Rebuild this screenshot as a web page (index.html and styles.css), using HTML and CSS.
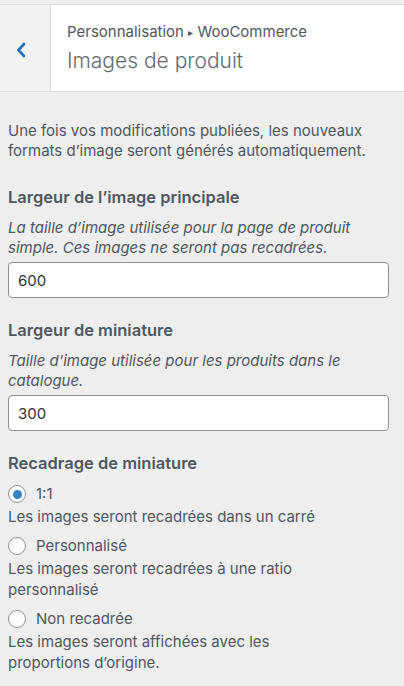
FILE: index.html
```html
<!DOCTYPE html>
<html lang="fr">
<head>
    <meta charset="UTF-8">
    <meta name="viewport" content="width=device-width, initial-scale=1.0">
    <title>Images de produit</title>
    <link rel="stylesheet" href="styles.css">
</head>
<body>
    <div class="panel">
        <header class="panel-head">
            <button class="back" type="button" aria-label="Retour">
                <svg width="10" height="16" viewBox="0 0 10 16">
                    <polyline points="8,2 2.5,8 8,14" fill="none" stroke="#2271b1" stroke-width="2.6" stroke-linecap="round" stroke-linejoin="round"/>
                </svg>
            </button>
            <div class="head-title">
                <div class="crumb">Personnalisation <span class="sep">&#9656;</span> WooCommerce</div>
                <h1>Images de produit</h1>
            </div>
        </header>

        <div class="content">
            <p class="intro">Une fois vos modifications publiées, les nouveaux formats d’image seront générés automatiquement.</p>

            <div class="field">
                <h2>Largeur de l’image principale</h2>
                <p class="desc">La taille d’image utilisée pour la page de produit simple. Ces images ne seront pas recadrées.</p>
                <input class="text-input" type="text" value="600">
            </div>

            <div class="field">
                <h2>Largeur de miniature</h2>
                <p class="desc">Taille d’image utilisée pour les produits dans le catalogue.</p>
                <input class="text-input" type="text" value="300">
            </div>

            <div class="field">
                <h2>Recadrage de miniature</h2>
                <div class="options">
                    <div class="option">
                        <label class="radio"><span class="dot checked"></span>1:1</label>
                        <p class="option-desc">Les images seront recadrées dans un carré</p>
                    </div>
                    <div class="option">
                        <label class="radio"><span class="dot"></span>Personnalisé</label>
                        <p class="option-desc">Les images seront recadrées à une ratio personnalisé</p>
                    </div>
                    <div class="option">
                        <label class="radio"><span class="dot"></span>Non recadrée</label>
                        <p class="option-desc">Les images seront affichées avec les proportions d’origine.</p>
                    </div>
                </div>
            </div>
        </div>
    </div>
</body>
</html>
```

FILE: styles.css
```css
body {
    margin: 0;
    background-color: #eeeeee;
    font-family: Inter, 'Noto Sans', sans-serif;
    font-size: 15px;
    color: #50575e;
}

.panel {
    width: 404px;
}

.panel-head {
    display: flex;
    margin-top: 4px;
    height: 86px;
    background-color: #fff;
    border-top: 1px solid #dcdcde;
    border-bottom: 1px solid #dcdcde;
}

.back {
    width: 51px;
    flex: none;
    border: 0;
    border-right: 1px solid #dcdcde;
    background-color: #f1f1f1;
    display: flex;
    align-items: center;
    justify-content: flex-start;
    padding: 3px 0 0 16px;
    margin: 0;
}

.head-title {
    padding: 16px 0 0 16px;
}

.crumb {
    font-size: 15px;
    line-height: 22px;
    color: #50575e;
}

.crumb .sep {
    font-size: 10px;
    vertical-align: 1px;
}

h1 {
    margin: 5px 0 0;
    font-size: 21px;
    font-weight: 300;
    line-height: 26px;
    color: #646970;
}

.content {
    display: flex;
    flex-direction: column;
    padding: 29px 15px 20px 8px;
}

.intro {
    margin: 0 0 4px;
    line-height: 20px;
}

.field {
    margin-top: 22px;
}

h2 {
    margin: 0;
    font-size: 16.5px;
    font-weight: 600;
    line-height: 20px;
    color: #50575e;
}

.desc {
    margin: 11px 0 0;
    font-style: italic;
    line-height: 20px;
}

.text-input {
    display: block;
    box-sizing: border-box;
    width: 100%;
    height: 36px;
    margin-top: 4px;
    padding: 0 9px;
    border: 1px solid #8c8f94;
    border-radius: 4px;
    background: #fff;
    font-family: inherit;
    font-size: 15px;
    color: #2c3338;
}

.options {
    display: flex;
    flex-direction: column;
    gap: 9px;
    margin-top: 11px;
}

.radio {
    display: flex;
    align-items: center;
    gap: 10px;
    line-height: 20px;
}

.dot {
    box-sizing: border-box;
    width: 18px;
    height: 18px;
    border: 1px solid #8c8f94;
    border-radius: 50%;
    background: #fff;
    display: flex;
    align-items: center;
    justify-content: center;
}

.dot.checked::after {
    content: "";
    width: 9px;
    height: 9px;
    border-radius: 50%;
    background-color: #3582c4;
}

.option-desc {
    max-width: 330px;
    margin: 2px 0 0;
    line-height: 21px;
}
```
